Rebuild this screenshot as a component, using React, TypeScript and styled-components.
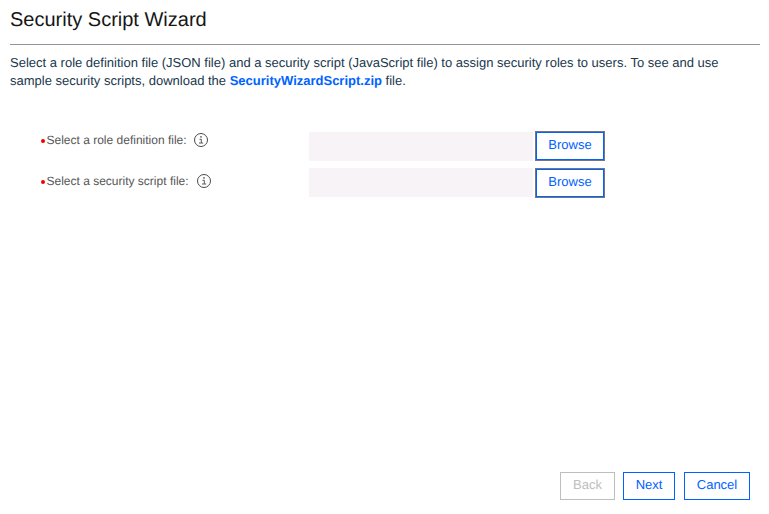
import React from 'react';
import styled, { createGlobalStyle } from 'styled-components';

const GlobalStyle = createGlobalStyle`
  *, *::before, *::after { box-sizing: border-box; }
  body {
    margin: 0;
    background: #fff;
    font-family: "Liberation Sans", Arial, sans-serif;
    text-rendering: geometricPrecision;
  }
`;

const Page = styled.main`
  display: flex;
  flex-direction: column;
  height: 514px;
  padding: 0 9px 14px 10px;
`;

const Title = styled.h1`
  margin: 0;
  height: 45px;
  padding-top: 8px;
  border-bottom: 1px solid #949494;
  color: #161616;
  font-size: 20px;
  font-weight: 400;
  line-height: 24px;
`;

const Intro = styled.p`
  margin: 9px 0 0;
  color: #20374c;
  font-size: 13px;
  line-height: 18px;
`;

const Download = styled.a`
  color: #0062ff;
  font-weight: 700;
  text-decoration: none;
`;

const Form = styled.form`
  display: flex;
  flex-direction: column;
  gap: 7px;
  margin: 41px 0 0 30px;
`;

const Row = styled.div`
  display: grid;
  grid-template-columns: 269px 226px 70px;
  height: 30px;
`;

const Label = styled.label<{ $top: number; $gap: number }>`
  display: flex;
  align-items: center;
  height: 18px;
  margin-top: ${({ $top }) => $top}px;
  color: #565656;
  font-size: 12px;
  line-height: 18px;
  white-space: nowrap;

  svg { margin-left: ${({ $gap }) => $gap}px; }
`;

const Required = styled.span`
  width: 4px;
  height: 4px;
  margin: 1px 1.5px 0 1px;
  border-radius: 50%;
  background: #f00000;
`;

const FileName = styled.div<{ $top: number }>`
  height: 29px;
  margin-top: ${({ $top }) => $top}px;
  width: 224px;
  background: #f7f3f7;
`;

const Button = styled.button<{ $width: number }>`
  width: ${({ $width }) => $width}px;
  height: 28px;
  padding: 0 0 3px;
  border: 1px solid #0062ff;
  background: #fff;
  color: #0062ff;
  font: 13px/19px "Liberation Sans", Arial, sans-serif;
  text-rendering: geometricPrecision;

  &:disabled {
    border-color: #bebebe;
    color: #bebebe;
  }
`;

const BrowseFrame = styled.div`
  display: flex;
  width: 70px;
  height: 30px;
  border: 1px solid #777;
`;

const Footer = styled.footer`
  display: flex;
  justify-content: flex-end;
  margin-top: auto;
  padding-right: 10px;
`;

const Next = styled(Button)`
  margin: 0 9px 0 8px;
`;

const InfoIcon = () => (
  <svg width="16" height="16" viewBox="0 0 16 16" fill="none" stroke="#4a4a4a" aria-hidden="true">
    <circle cx="8" cy="8" r="6.5" />
    <path d="M6.5 7.3h1.8v3.5M6 11h4.2" strokeWidth=".95" />
    <circle cx="8" cy="4.9" r=".8" fill="#4a4a4a" stroke="none" />
  </svg>
);

const files = [
  { label: 'Select a role definition file:', labelTop: 0, iconGap: 6.5, fieldTop: 1 },
  { label: 'Select a security script file:', labelTop: 4, iconGap: 7.2, fieldTop: 0 },
];

export default function App() {
  return (
    <>
      <GlobalStyle />
      <Page>
        <Title>Security Script Wizard</Title>
        <Intro>
          Select a role definition file (JSON file) and a security script (JavaScript file) to assign
          security roles to users. To see and use sample security scripts, download the{' '}
          <Download href="#">SecurityWizardScript.zip</Download> file.
        </Intro>
        <Form>
          {files.map((file) => (
            <Row key={file.label}>
              <Label $top={file.labelTop} $gap={file.iconGap}>
                <Required />
                {file.label}
                <InfoIcon />
              </Label>
              <FileName $top={file.fieldTop} />
              <BrowseFrame>
                <Button type="button" $width={68}>Browse</Button>
              </BrowseFrame>
            </Row>
          ))}
        </Form>
        <Footer>
          <Button type="button" $width={55} disabled>Back</Button>
          <Next type="button" $width={52}>Next</Next>
          <Button type="button" $width={66}>Cancel</Button>
        </Footer>
      </Page>
    </>
  );
}
